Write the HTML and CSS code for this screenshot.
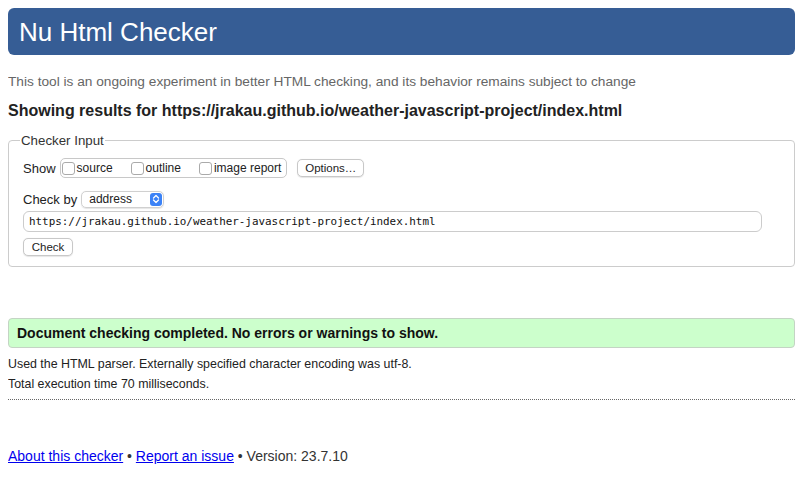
FILE: index.html
```html
<!DOCTYPE html>
<html lang="en">
<head>
<meta charset="utf-8">
<title>Nu Html Checker</title>
<link rel="stylesheet" href="styles.css">
</head>
<body>
<h1 class="banner">Nu Html Checker</h1>
<p class="intro">This tool is an ongoing experiment in better HTML checking, and its behavior remains subject to change</p>
<h2 class="results">Showing results for https://jrakau.github.io/weather-javascript-project/index.html</h2>
<fieldset class="input-set">
  <legend>Checker Input</legend>
  <div class="row show-row">
    <span class="lbl">Show</span>
    <div class="show-box">
      <label class="opt"><span class="cb"></span>source</label>
      <label class="opt"><span class="cb"></span>outline</label>
      <label class="opt"><span class="cb"></span>image report</label>
    </div>
    <span class="btn">Options…</span>
  </div>
  <div class="row by-row">
    <span class="lbl">Check by</span>
    <span class="select">address<span class="stepper"><svg width="8" height="10" viewBox="0 0 8 10"><path d="M1.5 4 L4 1.5 L6.5 4 M1.5 6 L4 8.5 L6.5 6" fill="none" stroke="#fff" stroke-width="1.3" stroke-linecap="round" stroke-linejoin="round"/></svg></span></span>
  </div>
  <div class="url">https://jrakau.github.io/weather-javascript-project/index.html</div>
  <span class="btn check">Check</span>
</fieldset>
<div class="success">Document checking completed. No errors or warnings to show.</div>
<p class="detail">Used the HTML parser. Externally specified character encoding was utf-8.</p>
<p class="detail">Total execution time 70 milliseconds.</p>
<hr class="dots">
<p class="footer"><a href="#">About this checker</a> • <a href="#">Report an issue</a> • Version: 23.7.10</p>
</body>
</html>
```
FILE: styles.css
```css
* { box-sizing: border-box; }
body {
  margin: 8px 13px 8px 8px;
  font-family: "Liberation Sans", Arial, sans-serif;
  color: #222;
  background: #fff;
}
.banner {
  margin: 0;
  height: 47px;
  background: #365d95;
  color: #fff;
  border-radius: 6px;
  font-size: 26px;
  font-weight: normal;
  padding: 10px 11px 0;
  line-height: 28px;
}
.intro {
  margin: 19px 0 0;
  font-size: 13.7px;
  color: #666;
  line-height: 16px;
}
.results {
  margin: 11px 0 0;
  font-size: 16px;
  line-height: 20px;
  font-weight: bold;
  color: #222;
}
.input-set {
  margin: 12px 0 0;
  border: 1px solid #ccc;
  border-radius: 4px;
  padding: 10px 14px 10px;
  font-size: 13px;
}
.input-set legend {
  padding: 0 1px;
  margin-left: -3px;
  font-size: 13.3px;
  color: #333;
}
.row {
  display: flex;
  align-items: center;
}
.lbl { color: #222; }
.show-row { height: 20px; }
.show-box {
  margin-left: 4px;
  height: 20px;
  border: 1px solid #c8c8c8;
  border-radius: 5px;
  display: flex;
  align-items: center;
  padding: 0 5px 0 1px;
  gap: 18px;
  font-size: 12px;
}
.opt {
  display: flex;
  align-items: center;
  color: #222;
}
.cb {
  width: 13px;
  height: 13px;
  border: 1px solid #aaa;
  border-radius: 3px;
  margin-right: 2px;
  background: #fff;
}
.btn {
  display: inline-flex;
  align-items: center;
  justify-content: center;
  border: 1px solid #c8c8c8;
  border-radius: 5px;
  height: 18px;
  padding: 0 8px;
  font-size: 11.5px;
  background: #fff;
  color: #222;
  box-shadow: 0 0.5px 1px rgba(0,0,0,0.1);
}
.show-row .btn { margin-left: 10px; width: 67px; padding: 0; }
.by-row { margin-top: 12px; height: 18px; }
.select {
  margin-left: 4px;
  width: 83px;
  height: 17px;
  border: 1px solid #d0d0d0;
  border-radius: 5px;
  display: flex;
  align-items: center;
  justify-content: space-between;
  padding: 0 1px 0 7px;
  font-size: 12px;
  box-shadow: 0 0.5px 1px rgba(0,0,0,0.1);
}
.stepper {
  width: 12px;
  height: 13px;
  background: #3b82f6;
  border-radius: 3px;
  display: flex;
  align-items: center;
  justify-content: center;
}
.url {
  margin-top: 3px;
  width: 739px;
  height: 21px;
  border: 1px solid #ccc;
  border-radius: 6px;
  padding: 0 5px;
  font-family: "DejaVu Sans Mono", monospace;
  font-size: 10.9px;
  line-height: 19px;
  color: #111;
}
.check {
  margin-top: 6px;
  width: 50px;
  padding: 0;
}
.success {
  margin-top: 51px;
  height: 30px;
  background: #ccffcc;
  border: 1px solid #c4d4c4;
  border-radius: 4px;
  padding: 0 8px;
  font-weight: bold;
  font-size: 14px;
  line-height: 28px;
  color: #111;
}
.detail {
  margin: 9px 0 0;
  font-size: 12.4px;
  line-height: 14px;
  color: #222;
}
.detail + .detail { margin-top: 6px; }
.dots {
  margin: 8px 0 0;
  border: 0;
  border-top: 1px dotted #666;
  height: 0;
}
.footer {
  margin: 47px 0 0;
  font-size: 14px;
  line-height: 18px;
  color: #333;
}
.footer a { color: #0000ee; text-decoration: underline; }
```
